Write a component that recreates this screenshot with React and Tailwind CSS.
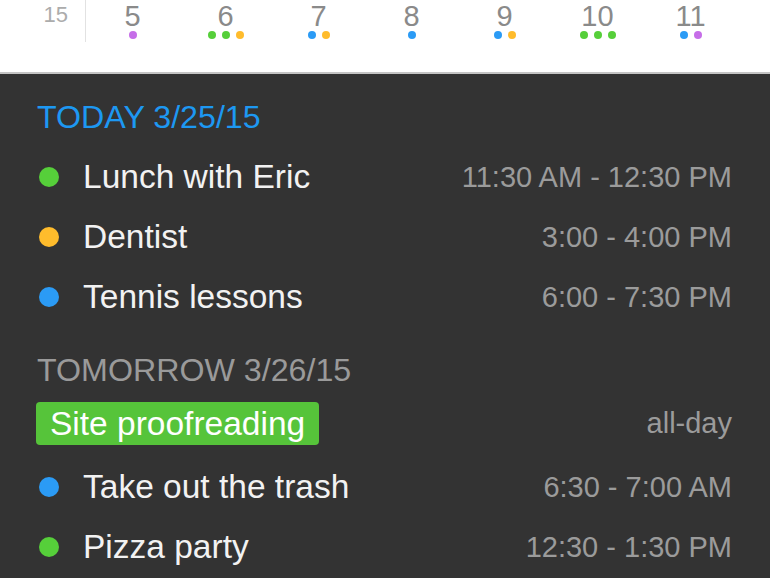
import React from "react";

const C = {
  purple: "bg-[#c66ee8]",
  green: "bg-[#56cf3a]",
  orange: "bg-[#ffbc2c]",
  blue: "bg-[#2b9bf5]",
};

const days = [
  { n: "5", dots: ["purple"] },
  { n: "6", dots: ["green", "green", "orange"] },
  { n: "7", dots: ["blue", "orange"] },
  { n: "8", dots: ["blue"] },
  { n: "9", dots: ["blue", "orange"] },
  { n: "10", dots: ["green", "green", "green"] },
  { n: "11", dots: ["blue", "purple"] },
];

function Row({ color, title, time }) {
  return (
    <div className="flex h-[60px] items-center">
      <span className={`w-[20px] h-[20px] rounded-full ${C[color]}`} />
      <span className="ml-[24px] text-[33.5px] leading-none text-[#f2f2f2]">{title}</span>
      <span className="ml-auto text-[29px] leading-none text-[#9b9b9b]">{time}</span>
    </div>
  );
}

export default function App() {
  return (
    <div
      className="w-[770px] h-[578px] overflow-hidden bg-[#333333]"
      style={{ fontFamily: '"Liberation Sans", Arial, sans-serif' }}
    >
      <div className="h-[72px] bg-white flex">
        <div className="w-[86px] h-[42px] border-r border-[#e2e2e2] flex justify-end pr-[17px] pt-[2px]">
          <span className="text-[22px] text-[#acacac] leading-[26px]">15</span>
        </div>
        <div className="flex">
          {days.map((d) => (
            <div key={d.n} className="w-[93px] flex flex-col items-center">
              <span className="text-[29px] leading-[32px] text-[#8a8a8a]">{d.n}</span>
              <div className="flex gap-[6px] mt-[-1px]">
                {d.dots.map((c, i) => (
                  <span key={i} className={`w-[8px] h-[8px] rounded-full ${C[c]}`} />
                ))}
              </div>
            </div>
          ))}
        </div>
      </div>
      <div className="h-[2px] bg-[#c4c4c4]" />
      <div className="pl-[39px] pr-[38px] pt-[13px]">
        <div className="flex h-[60px] items-center">
          <span className="-ml-[2px] text-[32.2px] leading-none text-[#1d98f2]">TODAY 3/25/15</span>
        </div>
        <Row color="green" title="Lunch with Eric" time="11:30 AM - 12:30 PM" />
        <Row color="orange" title="Dentist" time="3:00 - 4:00 PM" />
        <Row color="blue" title="Tennis lessons" time="6:00 - 7:30 PM" />
        <div className="flex h-[60px] items-center mt-[13px]">
          <span className="-ml-[2px] text-[32.2px] leading-none text-[#9a9a9a]">TOMORROW 3/26/15</span>
        </div>
        <div className="flex items-center h-[43px] mt-[2px]">
          <span className="-ml-[3px] h-[43px] flex items-center px-[14px] rounded-[4px] bg-[#56c43a] text-[33.5px] leading-none text-white">
            Site proofreading
          </span>
          <span className="ml-auto text-[29px] leading-none text-[#9b9b9b]">all-day</span>
        </div>
        <div className="mt-[12px]">
          <Row color="blue" title="Take out the trash" time="6:30 - 7:00 AM" />
          <Row color="green" title="Pizza party" time="12:30 - 1:30 PM" />
        </div>
      </div>
    </div>
  );
}
